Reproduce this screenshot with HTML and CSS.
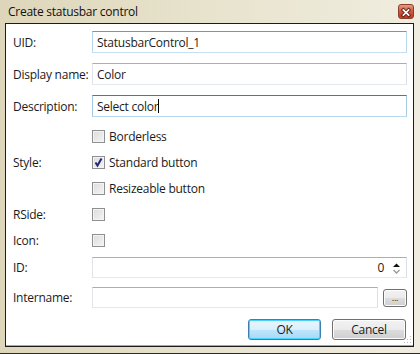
FILE: index.html
```html
<!DOCTYPE html>
<html>
<head>
  <title>Create statusbar control</title>
  <link rel="stylesheet" href="styles.css">
</head>
<body>
  <div class="window">
    <div class="titlebar">
      <span class="title">Create statusbar control</span>
      <span class="close">
        <svg width="16" height="15" viewBox="0 0 16 15">
          <path d="M5 4.5 L11 10.5 M11 4.5 L5 10.5" stroke="#5a1e12" stroke-width="4" stroke-linecap="square"/>
          <path d="M5 4.5 L11 10.5 M11 4.5 L5 10.5" stroke="#ffffff" stroke-width="2" stroke-linecap="square"/>
        </svg>
      </span>
    </div>

    <div class="client">
      <div class="row field first">
        <span class="label">UID:</span>
        <div class="textbox hover">StatusbarControl_1</div>
      </div>
      <div class="row field">
        <span class="label">Display name:</span>
        <div class="textbox">Color</div>
      </div>
      <div class="row field">
        <span class="label">Description:</span>
        <div class="textbox focus">Select color<span class="caret"></span></div>
      </div>

      <div class="row check first-check">
        <span class="label"></span>
        <span class="checkbox"></span>
        <span class="check-text">Borderless</span>
      </div>
      <div class="row check">
        <span class="label">Style:</span>
        <span class="checkbox">
          <svg width="11" height="11" viewBox="0 0 11 11">
            <path d="M2.5 5.5 L4.5 8.5 L8.5 1.5" fill="none" stroke="#25257a" stroke-width="2"/>
          </svg>
        </span>
        <span class="check-text">Standard button</span>
      </div>
      <div class="row check">
        <span class="label"></span>
        <span class="checkbox"></span>
        <span class="check-text">Resizeable button</span>
      </div>
      <div class="row check">
        <span class="label">RSide:</span>
        <span class="checkbox"></span>
      </div>
      <div class="row check">
        <span class="label">Icon:</span>
        <span class="checkbox"></span>
      </div>

      <div class="row small id-row">
        <span class="label">ID:</span>
        <div class="textbox spinbox">
          <span class="value">0</span>
          <svg class="arrows" width="9" height="14" viewBox="0 0 9 14">
            <path d="M1 6 L4.5 2.5 L8 6 Z" fill="#111"/>
            <path d="M1.5 9 L4.5 12 L7.5 9" fill="none" stroke="#9a9a9a" stroke-width="1.4"/>
          </svg>
        </div>
      </div>
      <div class="row small name-row">
        <span class="label">Intername:</span>
        <div class="textbox"></div>
        <span class="btn dots">...</span>
      </div>

      <div class="buttons">
        <span class="btn default">OK</span>
        <span class="btn">Cancel</span>
      </div>

      <svg class="grip" width="10" height="10" viewBox="0 0 10 10">
        <rect x="8" y="2" width="1" height="1" fill="#b9b9b9"/>
        <rect x="5" y="5" width="1" height="1" fill="#b9b9b9"/>
        <rect x="8" y="5" width="1" height="1" fill="#b9b9b9"/>
        <rect x="2" y="8" width="1" height="1" fill="#b9b9b9"/>
        <rect x="5" y="8" width="1" height="1" fill="#b9b9b9"/>
        <rect x="8" y="8" width="1" height="1" fill="#b9b9b9"/>
      </svg>
    </div>
  </div>
</body>
</html>
```

FILE: styles.css
```css
/* Dialog window */
body {
  margin: 0;
  font-family: "Open Sans", "Noto Sans", sans-serif;
  font-size: 12px;
  letter-spacing: -0.25px;
  color: #1b1b1b;
}

.window {
  width: 420px;
  height: 354px;
  box-sizing: border-box;
  background: linear-gradient(to right, #ddd6ba, #e8e3cd 50%, #f0ede0);
  border-bottom: 1px solid #2a2a2a;
  display: flex;
  flex-direction: column;
}

.titlebar {
  height: 23px;
  display: flex;
  align-items: center;
  justify-content: space-between;
  padding: 0 6px 0 8px;
}

.title {
  font-size: 12px;
  color: #111;
}

.close {
  width: 16px;
  height: 15px;
  box-sizing: border-box;
  border: 1px solid #8c3f2c;
  border-radius: 3px;
  background: linear-gradient(#e59b84, #d1553c 50%, #c03a22);
  display: flex;
}

.client {
  position: relative;
  margin: 0 6px 0 5px;
  height: 324px;
  box-sizing: border-box;
  border: 1px solid #1c1c1c;
  box-shadow: inset 0 -2px 0 -1px #a8a8a8;
  background: #fff;
  padding: 7px 6px 0 7px;
  display: flex;
  flex-direction: column;
}

.row {
  display: flex;
  align-items: center;
}

.label {
  width: 79px;
  flex: none;
}

.field {
  height: 22px;
  margin-top: 10px;
}

.field.first {
  margin-top: 0;
}

.textbox {
  flex: 1;
  height: 100%;
  box-sizing: border-box;
  border: 1px solid;
  border-color: #abadb3 #dbdfe6 #e3e9ef #e2e3ea;
  padding-left: 4px;
  display: flex;
  align-items: center;
}

.textbox.hover {
  border-color: #5a9fd4 #b7d7ee #c5e0f3 #b7d7ee;
}

.textbox.focus {
  border-color: #3d7bad #a4c9e3 #b7d9ed #a4c9e3;
}

.caret {
  width: 1px;
  height: 14px;
  background: #000;
}

/* Checkboxes */
.check {
  height: 26px;
}

.first-check {
  margin-top: 6px;
}

.checkbox {
  width: 13px;
  height: 13px;
  box-sizing: border-box;
  border: 1px solid #8e8f8f;
  background: linear-gradient(135deg, #dcdcdc, #f4f4f4);
  box-shadow: inset 0 0 0 1px #f4f4f4;
  display: flex;
  align-items: center;
  justify-content: center;
}

.check-text {
  margin-left: 4px;
}

.small {
  height: 21px;
}

.id-row {
  margin-top: 4px;
}

.name-row {
  margin-top: 9px;
}

.spinbox {
  justify-content: flex-end;
  padding-right: 5px;
}

.value {
  margin-right: 8px;
}

/* Buttons */
.btn {
  box-sizing: border-box;
  height: 21px;
  border: 1px solid #707070;
  border-radius: 3px;
  background: linear-gradient(#f2f2f2, #ebebeb 50%, #dddddd 51%, #cfcfcf);
  box-shadow: inset 0 0 0 1px #fcfcfc;
  display: flex;
  align-items: center;
  justify-content: center;
}

.dots {
  width: 24px;
  height: 18px;
  margin-left: 5px;
  font-size: 9px;
  line-height: 1;
}

.buttons {
  margin-top: 11px;
  margin-right: 1px;
  display: flex;
  justify-content: flex-end;
  gap: 11px;
}

.buttons .btn {
  width: 74px;
}

.buttons .default {
  width: 73px;
  border-color: #3c7fb1;
  background: linear-gradient(#eaf6fd, #d9f0fc 50%, #bee6fd 51%, #a7d9f5);
  box-shadow: inset 0 0 0 1px #48d2ff;
}

.grip {
  position: absolute;
  right: 1px;
  bottom: 2px;
}
```
